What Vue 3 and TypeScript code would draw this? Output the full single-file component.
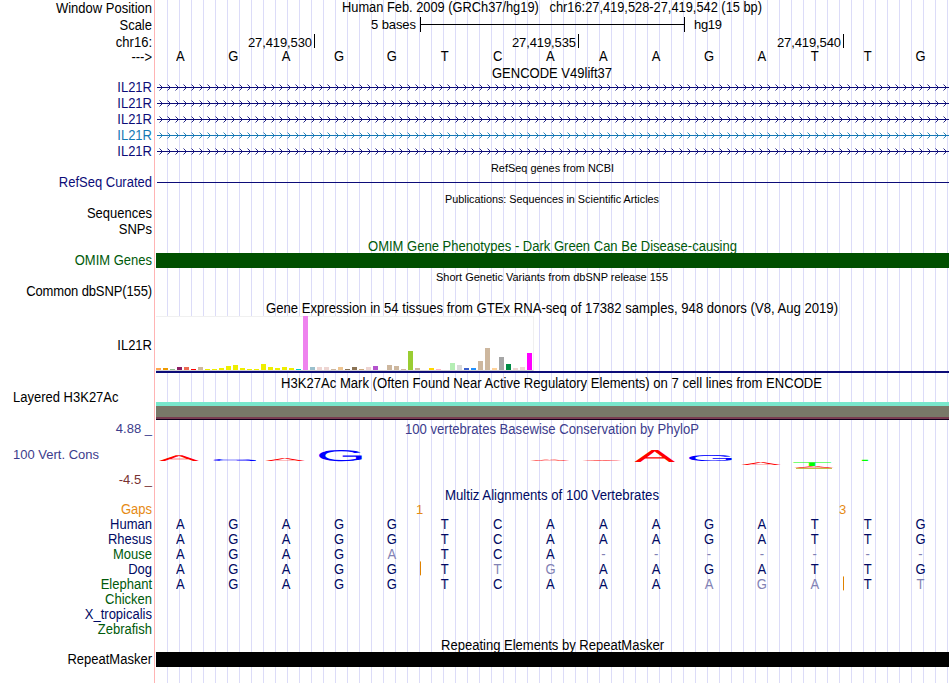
<template>
  <div class="browser">
    <div class="row h16 header">
      <div class="label">Window Position</div>
      <svg class="track" height="16">
        <text class="title" x="186" y="12" textLength="420" lengthAdjust="spacingAndGlyphs">{{ position }}</text>
      </svg>
    </div>
    <div class="row h17 scale">
      <div class="label">Scale</div>
      <svg class="track" height="17">
        <text x="215" y="13" textLength="45">5 bases</text>
        <path class="ruler" d="M264.5 1V16M264.5 8.5H528.5M528.5 1V16" />
        <text x="538" y="13" textLength="28">hg19</text>
      </svg>
    </div>
    <div class="row h17 scale">
      <div class="label">chr16:</div>
      <svg class="track" height="17">
        <g v-for="tick in ticks" :key="tick.label">
          <text :x="tick.x - 66" y="14" textLength="64">{{ tick.label }}</text>
          <path class="ruler" :d="`M${tick.x + 0.5} 1V15`" />
        </g>
      </svg>
    </div>
    <div class="row h16 strand">
      <div class="label">---&gt;</div>
      <div class="bases">
        <span v-for="(base, i) in reference" :key="i">{{ base }}</span>
      </div>
    </div>

    <div class="row h14">
      <svg class="track solo" height="14">
        <text class="title" x="336" y="12" textLength="120" lengthAdjust="spacingAndGlyphs">GENCODE V49lift37</text>
      </svg>
    </div>
    <div v-for="(color, i) in transcripts" :key="i" class="row h16" :style="{ color }">
      <div class="label">IL21R</div>
      <svg class="track" height="16">
        <path class="intron" d="M1 7.5H793" />
        <path class="arrows" :d="arrowPath" />
      </svg>
    </div>

    <div class="row h15">
      <svg class="track solo" height="15">
        <text class="small" x="335" y="12" textLength="123" lengthAdjust="spacingAndGlyphs">RefSeq genes from NCBI</text>
      </svg>
    </div>
    <div class="row h16 navy">
      <div class="label">RefSeq Curated</div>
      <svg class="track" height="16"><path class="intron" d="M1 7.5H793" /></svg>
    </div>

    <div class="row h15">
      <svg class="track solo" height="15">
        <text class="small" x="289" y="12" textLength="214" lengthAdjust="spacingAndGlyphs">Publications: Sequences in Scientific Articles</text>
      </svg>
    </div>
    <div class="row h16"><div class="label">Sequences</div></div>
    <div class="row h16"><div class="label">SNPs</div></div>

    <div class="row h15 green">
      <svg class="track solo" height="15">
        <text class="title" x="212" y="13" textLength="369" lengthAdjust="spacingAndGlyphs">OMIM Gene Phenotypes - Dark Green Can Be Disease-causing</text>
      </svg>
    </div>
    <div class="row h15 green">
      <div class="label">OMIM Genes</div>
      <div class="bar omim"></div>
    </div>

    <div class="row h16">
      <svg class="track solo" height="16">
        <text class="small" x="280" y="13" textLength="232" lengthAdjust="spacingAndGlyphs">Short Genetic Variants from dbSNP release 155</text>
      </svg>
    </div>
    <div class="row h16"><div class="label tight">Common dbSNP(155)</div></div>

    <div class="row h16">
      <svg class="track solo" height="16">
        <text class="title" x="110" y="13" textLength="572" lengthAdjust="spacingAndGlyphs">Gene Expression in 54 tissues from GTEx RNA-seq of 17382 samples, 948 donors (V8, Aug 2019)</text>
      </svg>
    </div>
    <div class="row gtex">
      <div class="label">IL21R</div>
      <div class="expression">
        <div class="plot">
          <i
            v-for="(tissue, i) in tissues"
            :key="i"
            :style="{ height: tissue[0] + 'px', background: tissue[1] }"
          ></i>
        </div>
      </div>
    </div>

    <div class="row h19">
      <svg class="track solo" height="19">
        <text class="title" x="125" y="15" textLength="541" lengthAdjust="spacingAndGlyphs">H3K27Ac Mark (Often Found Near Active Regulatory Elements) on 7 cell lines from ENCODE</text>
      </svg>
    </div>
    <div class="row h3k27ac">
      <div class="label left">Layered H3K27Ac</div>
      <div class="layers"></div>
    </div>

    <div class="row cons">
      <div class="label cons-label">
        <span class="upper">4.88 _</span>
        <span class="name">100 Vert. Cons</span>
        <span class="lower">-4.5 _</span>
      </div>
      <svg class="track" height="68">
        <text class="title cons-title" x="249" y="14" textLength="294" lengthAdjust="spacingAndGlyphs">100 vertebrates Basewise Conservation by PhyloP</text>
        <path class="residue" d="M640 48.4H676" />
        <text
          v-for="(glyph, i) in logo"
          :key="i"
          class="logo"
          :fill="glyph.fill"
          :transform="glyphTransform(glyph)"
        >{{ glyph.base }}</text>
      </svg>
    </div>

    <div class="row h15 dark">
      <svg class="track solo" height="15">
        <text class="title" x="289" y="12" textLength="214" lengthAdjust="spacingAndGlyphs">Multiz Alignments of 100 Vertebrates</text>
      </svg>
    </div>
    <div class="row h14 gaps">
      <div class="label">Gaps</div>
      <svg class="track" height="14">
        <text x="263.5" y="11" text-anchor="middle">1</text>
        <text x="686.5" y="11" text-anchor="middle">3</text>
      </svg>
    </div>
    <div v-for="s in species" :key="s.name" class="row h15">
      <div class="label" :class="s.tone">{{ s.name }}</div>
      <div class="bases dark">
        <span
          v-for="(base, i) in s.bases"
          :key="i"
          :class="{ mismatch: base !== reference[i], insert: s.insertAt === i }"
        >{{ base }}</span>
      </div>
    </div>

    <div class="row h15">
      <svg class="track solo" height="15">
        <text class="title" x="285" y="13" textLength="223" lengthAdjust="spacingAndGlyphs">Repeating Elements by RepeatMasker</text>
      </svg>
    </div>
    <div class="row h15">
      <div class="label">RepeatMasker</div>
      <div class="bar repeat"></div>
    </div>
  </div>
</template>

<script setup lang="ts">
interface Glyph {
  base: string
  fill: string
  x: number
  width: number
  top: number
  bottom: number
}

interface Species {
  name: string
  tone: string
  bases: string
  insertAt?: number
}

const position = 'Human Feb. 2009 (GRCh37/hg19)\u00a0\u00a0 chr16:27,419,528-27,419,542 (15 bp)'
const reference = 'AGAGGTCAAAGATTG'

const ticks = [
  { x: 158, label: '27,419,530' },
  { x: 422, label: '27,419,535' },
  { x: 687, label: '27,419,540' }
]

const navy = '#0c0c78'
const transcripts = [navy, navy, navy, '#1478b4', navy]

// Strand arrows, one every 8px
const arrowPath = Array.from({ length: 99 }, (_, i) => {
  const x = 6.5 + i * 8
  return `M${x - 3} 4.5L${x} 7.5L${x - 3} 10.5`
}).join('')

// [bar height, tissue color]
const tissues: [number, string][] = [
  [2, '#ffa54f'], [2, '#ee9a00'], [1, '#8fbc8f'], [3, '#8b1c62'], [3, '#ee6a50'], [1, '#ff0000'],
  [3, '#cdb79e'], [1, '#eeee00'], [1, '#eeee00'], [2, '#eeee00'], [4, '#eeee00'], [5, '#eeee00'],
  [2, '#eeee00'], [1, '#eeee00'], [1, '#eeee00'], [6, '#eeee00'], [3, '#eeee00'], [2, '#eeee00'],
  [3, '#eeee00'], [2, '#eeee00'], [1, '#00cdcd'], [54, '#ee82ee'], [3, '#9ac0cd'], [3, '#eed5d2'],
  [3, '#eed5d2'], [1, '#cdb79e'], [3, '#eec591'], [1, '#8b7355'], [3, '#8b7355'], [1, '#cdaa7d'],
  [3, '#eed5d2'], [4, '#b452cd'], [0, '#7a378b'], [5, '#cdb79e'], [4, '#cdb79e'], [1, '#cdb79e'],
  [19, '#9acd32'], [2, '#cdb79e'], [0, '#7a67ee'], [2, '#ffd700'], [1, '#ffb6c1'], [0, '#cd9b1d'],
  [7, '#b4eeb4'], [5, '#d9d9d9'], [2, '#3a5fcd'], [2, '#1e90ff'], [9, '#cdb79e'], [22, '#cdb79e'],
  [2, '#ffd39b'], [13, '#a6a6a6'], [6, '#008b45'], [2, '#eed5d2'], [3, '#eed5d2'], [17, '#ff00ff']
]

const logo: Glyph[] = [
  { base: 'A', fill: '#ff0000', x: 3, width: 40, top: 35, bottom: 40.8 },
  { base: 'G', fill: '#0000ff', x: 57.3, width: 43, top: 39.1, bottom: 41 },
  { base: 'A', fill: '#ff0000', x: 109, width: 40, top: 38, bottom: 40.8 },
  { base: 'G', fill: '#0000ff', x: 163, width: 43, top: 30, bottom: 41 },
  { base: 'A', fill: '#ff0000', x: 374, width: 40, top: 39.2, bottom: 40.8 },
  { base: 'A', fill: '#ff0000', x: 426, width: 40, top: 40, bottom: 41 },
  { base: 'A', fill: '#ff0000', x: 478.5, width: 40.5, top: 30, bottom: 42 },
  { base: 'G', fill: '#0000ff', x: 533, width: 43, top: 35, bottom: 41 },
  { base: 'A', fill: '#ff0000', x: 585, width: 40, top: 42, bottom: 44.8 },
  { base: 'T', fill: '#00ff00', x: 637, width: 38, top: 42, bottom: 45.8 },
  { base: 'A', fill: '#ff0000', x: 638, width: 40, top: 46.2, bottom: 48 },
  { base: 'T', fill: '#00ff00', x: 690, width: 38, top: 39.9, bottom: 41.2 }
]

// Ink box of each glyph at a 10px font size: left, right, height
const inkBox: Record<string, [number, number, number]> = {
  A: [0, 6.65, 6.88],
  G: [0.5, 7.1, 7],
  T: [0.2, 5.9, 6.88]
}

function glyphTransform(g: Glyph): string {
  const [left, right, height] = inkBox[g.base]
  const sx = g.width / (right - left)
  const sy = (g.bottom - g.top) / height
  return `translate(${g.x - left * sx} ${g.bottom}) scale(${sx} ${sy})`
}

const species: Species[] = [
  { name: 'Human', tone: 'dark', bases: 'AGAGGTCAAAGATTG' },
  { name: 'Rhesus', tone: 'dark', bases: 'AGAGGTCAAAGATTG' },
  { name: 'Mouse', tone: 'green', bases: 'AGAGATCA-------' },
  { name: 'Dog', tone: 'dark', bases: 'AGAGGTTGAAGATTG', insertAt: 5 },
  { name: 'Elephant', tone: 'green', bases: 'AGAGGTCAAAAGATT', insertAt: 13 },
  { name: 'Chicken', tone: 'green', bases: '' },
  { name: 'X_tropicalis', tone: 'dark', bases: '' },
  { name: 'Zebrafish', tone: 'green', bases: '' }
]
</script>

<style>
body {
  margin: 0;
  background: #fff;
}
</style>

<style scoped>
.browser {
  width: 949px;
  height: 683px;
  overflow: hidden;
  box-sizing: border-box;
  font-family: "Liberation Sans", Arial, sans-serif;
  font-size: 13px;
  color: #000;
  background:
    linear-gradient(#ffb4b4, #ffb4b4) 154px 0 / 1px 100% no-repeat,
    repeating-linear-gradient(to right, transparent 0 11px, #dcdcf8 11px 12px) 156px 0 / 793px 100% no-repeat,
    #fff;
}

.row {
  display: flex;
}

.h14 { height: 14px; }
.h15 { height: 15px; }
.h16 { height: 16px; }
.h17 { height: 17px; }
.h19 { height: 19px; }

.label {
  flex: none;
  width: 152px;
  height: 15px;
  margin-right: 4px;
  line-height: 15px;
  text-align: right;
  white-space: nowrap;
  transform: scaleY(1.07);
}

.header .label {
  height: 17px;
  line-height: 17px;
}

.scale .label {
  height: 19px;
  line-height: 19px;
}

.gaps .label {
  height: 14px;
  line-height: 14px;
}

.label.tight {
  letter-spacing: -0.12px;
}

.label.left {
  box-sizing: border-box;
  height: 12px;
  padding-left: 13px;
  line-height: 12px;
  text-align: left;
}

.track {
  display: block;
  flex: none;
  width: 793px;
  overflow: visible;
  fill: currentColor;
}

.solo {
  margin-left: 156px;
}

.title {
  font-size: 13.8px;
  white-space: pre;
}

.small {
  font-size: 11.7px;
}

.ruler {
  fill: none;
  stroke: #000;
  shape-rendering: crispEdges;
}

.intron {
  stroke: currentColor;
  shape-rendering: crispEdges;
}

.arrows {
  fill: none;
  stroke: currentColor;
  stroke-width: 0.9;
}

.bases {
  display: flex;
  width: 793px;
  height: 16px;
  margin-left: -2px;
  line-height: 16px;
  transform: scaleY(1.07);
}

.bases span {
  position: relative;
  flex: none;
  width: 52.87px;
  text-align: center;
}

.strand .bases {
  height: 13px;
  line-height: 13px;
}

.bases .mismatch {
  color: #8282b4;
}

/* Marks an insertion in front of this base */
.insert::before {
  content: "";
  position: absolute;
  left: 1.5px;
  top: 0;
  width: 1px;
  height: 13px;
  background: #e08200;
}

.navy { color: #0c0c78; }
.dark { color: #000a64; }
.green { color: #005a0a; }
.gaps { color: #e68a14; }

.bar {
  width: 793px;
  height: 15px;
}

.omim { background: #005000; }
.repeat { background: #000; }

.gtex {
  height: 57px;
}

.gtex .label {
  height: 59px;
  line-height: 59px;
}

.expression {
  width: 793px;
  height: 55px;
  border-bottom: 2px solid #0c0c78;
}

.plot {
  display: flex;
  align-items: flex-end;
  gap: 2px;
  box-sizing: border-box;
  width: 378px;
  height: 55px;
  border-right: 1px solid #f0f0f0;
  border-bottom: 1px solid #d0d0d0;
  background: linear-gradient(#f0f0f0, #f0f0f0) 0 0 / 100% 1px no-repeat, #fff;
}

.plot i {
  flex: none;
  width: 5px;
}

.h3k27ac {
  height: 28px;
}

.layers {
  width: 793px;
  height: 18px;
  margin-top: 10px;
  background: linear-gradient(#78e8cc 0 4px, #787868 4px 15px, #783c50 15px 17px, #14001e 17px);
}

.cons {
  height: 68px;
}

.label.cons-label {
  display: flex;
  flex-direction: column;
  justify-content: space-between;
  box-sizing: border-box;
  height: 67px;
  padding-top: 1px;
  color: #3c3c8c;
  transform: none;
}

.name {
  padding-left: 13px;
  text-align: left;
}

.lower {
  color: #783232;
}

.cons-title {
  fill: #3c3c8c;
}

.residue {
  stroke: #b4a000;
  stroke-width: 0.8;
}

.logo {
  font-size: 10px;
  text-rendering: geometricPrecision;
}
</style>
